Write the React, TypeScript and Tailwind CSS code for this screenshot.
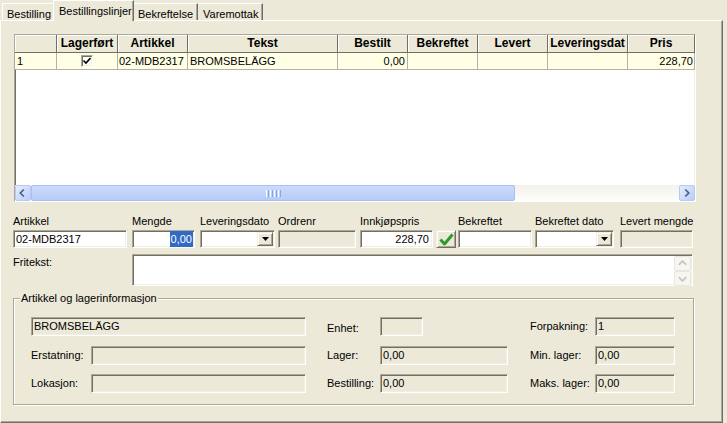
import React from "react";

const edit =
  "border border-t-[#ACA899] border-l-[#ACA899] border-r-white border-b-white shadow-[inset_1px_1px_0_#716F64,inset_-1px_-1px_0_#F1EFE2]";
const raised =
  "border border-t-[#F1EFE2] border-l-[#F1EFE2] border-r-[#716F64] border-b-[#716F64] shadow-[inset_1px_1px_0_#ffffff,inset_-1px_-1px_0_#ACA899]";

const columns = [
  { w: "w-[42px]", title: "", value: "1", align: "text-left pl-[2px]" },
  { w: "w-[61px]", title: "Lagerført", value: "check", align: "" },
  { w: "w-[70px]", title: "Artikkel", value: "02-MDB2317", align: "text-left pl-[1px]" },
  { w: "w-[150px]", title: "Tekst", value: "BROMSBELÄGG", align: "text-left pl-[2px]" },
  { w: "w-[70px]", title: "Bestilt", value: "0,00", align: "text-right pr-[2px]" },
  { w: "w-[70px]", title: "Bekreftet", value: "", align: "" },
  { w: "w-[70px]", title: "Levert", value: "", align: "" },
  { w: "w-[80px]", title: "Leveringsdat", value: "", align: "" },
  { w: "w-[67px]", title: "Pris", value: "228,70", align: "text-right pr-[1px]" },
];

function Chevron({ dir, color }: { dir: "left" | "right" | "up" | "down"; color: string }) {
  const d = {
    left: "M9 4 L5 8 L9 12",
    right: "M6 4 L10 8 L6 12",
    up: "M4 9 L8 5 L12 9",
    down: "M4 6 L8 10 L12 6",
  }[dir];
  return (
    <svg width="16" height="16" viewBox="0 0 16 16">
      <path d={d} fill="none" stroke={color} strokeWidth="2" />
    </svg>
  );
}

function ScrollArrow({ dir }: { dir: "left" | "right" }) {
  return (
    <div className="w-[16px] h-[16px] shrink-0 rounded-[2px] border border-[#B8CAF3] bg-gradient-to-br from-[#E4ECFE] to-[#B9CDF9] flex items-center justify-center">
      <Chevron dir={dir} color="#4D6185" />
    </div>
  );
}

function HScroll() {
  return (
    <div className="flex h-[16px] shrink-0 bg-gradient-to-b from-[#F3F1EA] to-[#FEFEFB]">
      <ScrollArrow dir="left" />
      <div className="w-[484px] shrink-0 rounded-[2px] border border-[#A8BFF2] bg-gradient-to-b from-[#CCDBFC] to-[#B6CBF8] flex items-center justify-center gap-[1px]">
        <div className="w-[1px] h-[7px] bg-white" />
        <div className="w-[1px] h-[7px] bg-[#8CA6DE]" />
        <div className="w-[1px] h-[7px] bg-white" />
        <div className="w-[1px] h-[7px] bg-[#8CA6DE]" />
        <div className="w-[1px] h-[7px] bg-white" />
        <div className="w-[1px] h-[7px] bg-[#8CA6DE]" />
        <div className="w-[1px] h-[7px] bg-white" />
        <div className="w-[1px] h-[7px] bg-[#8CA6DE]" />
      </div>
      <div className="flex-1" />
      <ScrollArrow dir="right" />
    </div>
  );
}

function CheckBox() {
  return (
    <div className={`${edit} w-[12px] h-[12px] bg-white flex items-center justify-center`}>
      <svg width="8" height="8" viewBox="0 0 8 8">
        <path d="M0.5 3.5 L3 6 L7.5 1" fill="none" stroke="black" strokeWidth="1.6" />
      </svg>
    </div>
  );
}

function Grid() {
  return (
    <div className={`ml-[1px] w-[682px] h-[168px] flex flex-col bg-white ${edit}`}>
      <div className="flex h-[18px] shrink-0">
        {columns.map((c, i) => (
          <div
            key={i}
            className={`${c.w} shrink-0 bg-[#ECE9D8] border-r border-b border-r-[#716F64] border-b-[#716F64] shadow-[inset_1px_1px_0_#ffffff] text-center font-bold text-[12px] leading-[17px] overflow-hidden whitespace-nowrap`}
          >
            {c.title}
          </div>
        ))}
      </div>
      <div className="flex h-[17px] shrink-0">
        {columns.map((c, i) => (
          <div
            key={i}
            className={`${c.w} ${c.align} shrink-0 bg-[#FFFFE6] border-r border-b border-[#B4B2A8] leading-[16px] overflow-hidden whitespace-nowrap flex items-center ${
              c.align.includes("text-right") ? "justify-end" : c.value === "check" ? "justify-center" : "justify-start"
            }`}
          >
            {c.value === "check" ? <CheckBox /> : c.value}
          </div>
        ))}
      </div>
      <div className="flex-1" />
      <HScroll />
    </div>
  );
}

function Combo({ className }: { className: string }) {
  return (
    <div className={`${edit} ${className} bg-white h-[18px] flex justify-end p-[1px]`}>
      <div className={`${raised} w-[16px] bg-[#ECE9D8] flex items-center justify-center`}>
        <svg width="7" height="4" viewBox="0 0 7 4">
          <path d="M0 0 H7 L3.5 4 Z" fill="black" />
        </svg>
      </div>
    </div>
  );
}

function Labeled({ label, className, children }: { label: string; className: string; children: React.ReactNode }) {
  return (
    <div className={`flex flex-col shrink-0 ${className}`}>
      <div className="h-[16px] leading-[14px] whitespace-nowrap">{label}</div>
      {children}
    </div>
  );
}

function InfoField({ className, value = "" }: { className: string; value?: string }) {
  return (
    <div className={`${edit} ${className} bg-[#ECE9D8] h-[19px] px-[2px] leading-[17px] shrink-0 whitespace-nowrap`}>
      {value}
    </div>
  );
}

export default function App() {
  return (
    <div className="w-[727px] h-[423px] overflow-hidden bg-[#ECE9D8] text-black text-[11px] leading-[13px] font-['Liberation_Sans',Arial,sans-serif] flex flex-col">
      {/* tabs */}
      <div className="flex items-end h-[20px] shrink-0 ml-[2px]">
        <div className="w-[51px] h-[17px] pl-[4px] pt-[4px] border-t border-l border-white">Bestilling</div>
        <div className="relative z-10 w-[81px] h-[21px] -mb-[1px] pl-[5px] pt-[4px] bg-[#ECE9D8] border-t border-l border-white border-r border-r-[#716F64] shadow-[inset_-1px_0_0_#ACA899]">
          Bestillingslinjer
        </div>
        <div className="w-[64px] h-[17px] pl-[4px] pt-[4px] border-t border-white border-r border-r-[#716F64] shadow-[inset_-1px_0_0_#ACA899]">
          Bekreftelse
        </div>
        <div className="w-[65px] h-[17px] pl-[5px] pt-[4px] border-t border-white border-r border-r-[#716F64] shadow-[inset_-1px_0_0_#ACA899]">
          Varemottak
        </div>
      </div>

      {/* panel */}
      <div className="w-[723px] flex-1 border-t border-l border-white border-r border-b border-r-[#716F64] border-b-[#716F64] shadow-[inset_-1px_-1px_0_#ACA899] pl-[12px] pt-[13px]">
        <Grid />

        <div className="flex mt-[12px]">
          <Labeled label="Artikkel" className="w-[114px]">
            <div className={`${edit} h-[18px] bg-white pl-[2px] leading-[16px]`}>02-MDB2317</div>
          </Labeled>
          <Labeled label="Mengde" className="ml-[5px] w-[63px]">
            <div className={`${edit} h-[18px] bg-white pr-[1px] leading-[16px] flex justify-end items-center`}>
              <span className="bg-[#316AC5] text-white px-[1px]">0,00</span>
            </div>
          </Labeled>
          <Labeled label="Leveringsdato" className="ml-[5px] w-[75px]">
            <Combo className="w-[75px]" />
          </Labeled>
          <Labeled label="Ordrenr" className="ml-[3px] w-[78px]">
            <div className={`${edit} h-[18px] bg-[#ECE9D8]`} />
          </Labeled>
          <Labeled label="Innkjøpspris" className="ml-[4px] w-[73px]">
            <div className={`${edit} h-[18px] bg-white pr-[3px] leading-[16px] text-right`}>228,70</div>
          </Labeled>
          <div className={`${raised} ml-[3px] mt-[16px] w-[20px] h-[18px] bg-[#ECE9D8] flex items-center justify-center`}>
            <svg width="15" height="13" viewBox="0 0 15 13">
              <path d="M1.5 6.5 L5.5 11 L13.5 1.5" fill="none" stroke="#2F9A2F" strokeWidth="3" strokeLinejoin="round" />
            </svg>
          </div>
          <Labeled label="Bekreftet" className="ml-[2px] w-[74px]">
            <div className={`${edit} h-[18px] bg-white`} />
          </Labeled>
          <Labeled label="Bekreftet dato" className="ml-[3px] w-[79px]">
            <Combo className="w-[79px]" />
          </Labeled>
          <Labeled label="Levert mengde" className="ml-[6px] w-[73px]">
            <div className={`${edit} h-[18px] bg-[#ECE9D8]`} />
          </Labeled>
        </div>

        <div className="flex mt-[6px]">
          <div className="w-[119px] pt-[2px]">Fritekst:</div>
          <div className={`${edit} w-[561px] h-[32px] bg-white flex justify-end p-[1px]`}>
            <div className="w-[17px] flex flex-col">
              <div className="h-[15px] rounded-[2px] border border-[#E8E6DE] bg-[#F7F6F1] flex items-center justify-center">
                <Chevron dir="up" color="#C9C7BE" />
              </div>
              <div className="h-[15px] rounded-[2px] border border-[#E8E6DE] bg-[#F7F6F1] flex items-center justify-center">
                <Chevron dir="down" color="#C9C7BE" />
              </div>
            </div>
          </div>
        </div>

        <fieldset className="mt-[6px] w-[681px] h-[113px] border border-[#ACA899] shadow-[inset_1px_1px_0_#ffffff,1px_1px_0_#ffffff]">
          <legend className="ml-[6px] px-[1px] bg-[#ECE9D8] leading-[13px]">Artikkel og lagerinformasjon</legend>
          <div className="pt-[12px] pl-[17px] flex flex-col">
            <div className="flex items-center">
              <div className="w-[275px] flex">
                <InfoField className="w-[275px]" value="BROMSBELÄGG" />
              </div>
              <div className="ml-[21px] w-[181px] flex items-center">
                <div className="w-[53px] pt-[4px]">Enhet:</div>
                <InfoField className="w-[43px]" />
              </div>
              <div className="ml-[22px] flex items-center">
                <div className="w-[65px]">Forpakning:</div>
                <InfoField className="w-[80px]" value="1" />
              </div>
            </div>
            <div className="flex items-center mt-[10px]">
              <div className="w-[275px] flex items-center">
                <div className="w-[60px]">Erstatning:</div>
                <InfoField className="w-[215px]" />
              </div>
              <div className="ml-[21px] w-[181px] flex items-center">
                <div className="w-[53px]">Lager:</div>
                <InfoField className="w-[128px]" value="0,00" />
              </div>
              <div className="ml-[22px] flex items-center">
                <div className="w-[65px]">Min. lager:</div>
                <InfoField className="w-[80px]" value="0,00" />
              </div>
            </div>
            <div className="flex items-center mt-[9px]">
              <div className="w-[275px] flex items-center">
                <div className="w-[60px]">Lokasjon:</div>
                <InfoField className="w-[215px]" />
              </div>
              <div className="ml-[21px] w-[181px] flex items-center">
                <div className="w-[53px]">Bestilling:</div>
                <InfoField className="w-[128px]" value="0,00" />
              </div>
              <div className="ml-[22px] flex items-center">
                <div className="w-[65px]">Maks. lager:</div>
                <InfoField className="w-[80px]" value="0,00" />
              </div>
            </div>
          </div>
        </fieldset>
      </div>
    </div>
  );
}
